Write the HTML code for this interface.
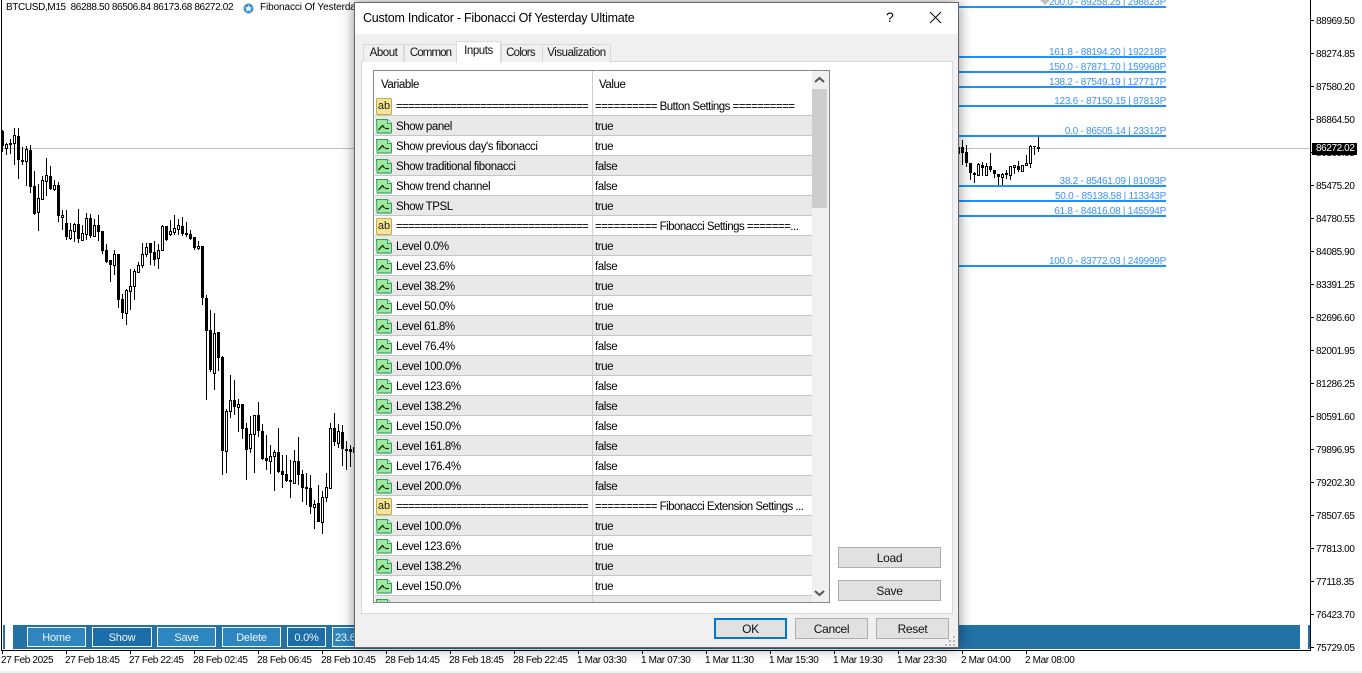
<!DOCTYPE html>
<html><head><meta charset="utf-8"><title>Custom Indicator</title>
<style>
html,body{margin:0;padding:0;background:#fff}
body{width:1362px;height:673px;position:relative;overflow:hidden;font-family:"Liberation Sans",sans-serif;color:#000}
.t{position:absolute;white-space:nowrap;font-size:10px;line-height:12px;letter-spacing:-.36px}
.p{left:1316px;color:#000;margin-top:3px;letter-spacing:-.4px}
.x{top:655px}
.f{right:196px;color:#3c91ff;letter-spacing:-.26px;margin-top:1px}
.l{position:absolute;left:940px;width:226px;height:2px;background:#1e90ff}
.k{position:absolute;top:650px;width:1px;height:4px;background:#000}
.y{position:absolute;left:1310px;width:4px;height:1px;background:#000}
.bar{position:absolute;top:625px;height:24px;background:#2272a6}
.bb{position:absolute;top:627px;height:18px;border:1px solid #fff;color:#f2f6fa;font-size:11px;line-height:20px;text-align:center;background:#2e86c0;box-sizing:content-box;letter-spacing:-.2px}
.d{background:#1b6ea9}
#dlg{position:absolute;left:354px;top:2px;width:605px;height:646px;box-sizing:border-box;background:#f0f0f0;border:1px solid #666;box-shadow:0 0 13px rgba(0,0,0,.45)}
#tb{position:absolute;left:0;top:0;right:0;height:31px;background:#fff}
.dt{position:absolute;white-space:nowrap;font-size:12px;line-height:14px;letter-spacing:-.42px;color:#000}
.tab{position:absolute;top:41px;height:17px;background:#f0f0f0;border:1px solid #d9d9d9;border-bottom:none;font-size:11.5px;line-height:16px;text-align:center;letter-spacing:-.45px;color:#111}
#pan{position:absolute;left:6px;top:58px;width:590px;height:551px;background:#fff;border:1px solid #d9d9d9}
#list{position:absolute;left:18px;top:67px;width:455px;height:531px;background:#fff;border:1px solid #828790;overflow:hidden}
.r{position:absolute;left:1px;width:437px;height:19px;border-bottom:1px solid #c6c6c6;font-size:11.5px;letter-spacing:-.42px;line-height:19px;color:#000}
.g{background:#e9e9e9}
.r svg{position:absolute;left:1px;top:2px;height:16px}
.r .a{position:absolute;left:21px;top:2px;white-space:nowrap;width:195px;overflow:hidden}
.r .b{position:absolute;left:220px;top:2px;white-space:nowrap;width:216px;overflow:hidden}
.r .e{letter-spacing:-.72px}
.r .v{letter-spacing:-.52px}
.ab{position:absolute;left:1px;top:2px;width:14px;height:15px;background:#f6e594;border:1px solid #c0a84c;border-radius:2px;font-size:11px;line-height:14px;text-align:center;letter-spacing:0;color:#222}
.sep{position:absolute;left:218px;top:0;width:1px;height:531px;background:#cfcfcf}
.btn{position:absolute;background:#e1e1e1;border:1px solid #adadad;box-sizing:border-box;font-size:12px;line-height:21px;text-align:center;letter-spacing:-.3px;color:#111}
</style></head><body>
<svg width="0" height="0" style="position:absolute"><defs>
<symbol id="gi" viewBox="0 0 16 16"><path d="M.5 1.500h11l4 4v9l-1.500 1-1.500-1-1.500 1-1.500-1-1.500 1-1.500-1-1.500 1-1.500-1-1.500 1-1-1z" fill="#9fe89c" stroke="#2fa060"/><path d="M11.500 1.500v4h4" fill="#e4f8e0" stroke="#2fa060"/><path d="M2.500 12l4-4.500 2 2.500" fill="none" stroke="#0d2a1c" stroke-width="1.300"/><path d="M9 10.500h4" stroke="#0d2a1c" stroke-width="1.200"/></symbol>
</defs></svg>

<svg width="1362" height="673" style="position:absolute;left:0;top:0">
<rect x="0" y="671" width="1362" height="2" fill="#f0f0f0"/>
<rect x="1" y="0" width="1" height="650" fill="#000"/>
<rect x="1" y="650" width="1310" height="1" fill="#000"/>
<rect x="1310" y="0" width="1" height="651" fill="#000"/>
<rect x="2" y="148" width="1308" height="1" fill="#c0c0c0"/>
<path stroke="#000" fill="none" d="M2.500 130V152M6.500 143V155M10.500 139V154M14.500 128V165M18.500 128V179M22.500 147V165M26.500 146V186M30.500 145V193M34.500 171V215M38.500 184V231M42.500 176V200M46.500 158V196M50.500 166V190M54.500 180V191M58.500 182V222M62.500 210V230M66.500 210V240M70.500 223V240M74.500 223V242M78.500 209V243M82.500 225V241M86.500 213V240M90.500 214V238M94.500 219V236M98.500 215V241M102.500 231V254M106.500 244V263M110.500 260V282M114.500 250V275M118.500 254V308M122.500 294V319M126.500 289V325M130.500 269V310M134.500 269V300M138.500 262V273M142.500 243V268M146.500 243V257M150.500 243V265M154.500 241V266M158.500 244V269M162.500 225V250M166.500 226V241M170.500 220V236M174.500 215V235M178.500 219V235M182.500 217V236M186.500 222V237M190.500 230V240M194.500 237V250M198.500 241V250M202.500 246V305M206.500 295V400M210.500 310V372M214.500 313V390M218.500 332V371M222.500 356V475M226.500 409V473M230.500 375V418M234.500 380V415M238.500 399V432M242.500 404V439M246.500 423V480M250.500 416V453M254.500 415V473M258.500 402V437M262.500 424V460M266.500 435V470M270.500 445V474M274.500 450V491M278.500 428V473M282.500 455V488M286.500 455V482M290.500 460V498M294.500 450V484M298.500 437V485M302.500 470V502M306.500 473V505M310.500 475V514M314.500 500V529M318.500 485V522M322.500 491V534M326.500 473V502M330.500 423V489M334.500 413V446M338.500 424V448M342.500 425V466M346.500 441V470M350.500 445V467M354.500 433V456M958.500 145V160M962.500 140V165M966.500 145V167M970.500 163V180M974.500 172V183M978.500 163V176M982.500 162V176M986.500 163V176M990.500 153V172M994.500 170V178M998.500 174V186M1002.500 173V186M1006.500 170V179M1010.500 166V180M1014.500 165V174M1018.500 161V172M1022.500 165V172M1026.500 155V165M1030.500 145V168M1034.500 146V155M1038.500 136V152"/>
<path fill="#000" d="M1 131h3v15h-3zM9 143h3v2h-3zM17 136h3v24h-3zM21 160h3v2h-3zM29 150h3v37h-3zM33 186h3v28h-3zM49 176h3v13h-3zM57 185h3v31h-3zM65 223h3v14h-3zM77 224h3v15h-3zM89 218h3v18h-3zM97 225h3v7h-3zM101 231h3v20h-3zM105 250h3v12h-3zM109 260h3v5h-3zM117 254h3v46h-3zM121 299h3v14h-3zM149 243h3v10h-3zM153 252h3v8h-3zM165 226h3v14h-3zM181 226h3v8h-3zM185 233h3v2h-3zM189 234h3v5h-3zM193 237h3v11h-3zM201 246h3v52h-3zM205 298h3v33h-3zM209 330h3v40h-3zM217 332h3v26h-3zM221 357h3v94h-3zM233 400h3v7h-3zM241 404h3v25h-3zM245 428h3v22h-3zM257 415h3v16h-3zM261 431h3v28h-3zM265 458h3v3h-3zM277 452h3v20h-3zM281 471h3v4h-3zM285 474h3v7h-3zM289 480h3v2h-3zM297 461h3v14h-3zM301 474h3v14h-3zM305 487h3v2h-3zM309 488h3v19h-3zM317 503h3v19h-3zM333 428h3v14h-3zM341 432h3v17h-3zM345 449h3v2h-3zM349 449h3v3h-3zM957 147h3v7h-3zM961 147h3v6h-3zM965 152h3v11h-3zM969 163h3v10h-3zM973 173h3v2h-3zM981 165h3v3h-3zM989 166h3v4h-3zM993 170h3v4h-3zM997 174h3v3h-3zM1005 173h3v2h-3zM1017 166h3v4h-3zM1033 146h3v1h-3zM1037 147h3v2h-3z"/>
<g fill="#fff" stroke="#000"><rect x="5.500" y="144.500" width="2" height="4"/><rect x="13.500" y="135.500" width="2" height="8"/><rect x="25.500" y="149.500" width="2" height="12"/><rect x="37.500" y="198.500" width="2" height="14"/><rect x="41.500" y="180.500" width="2" height="19"/><rect x="45.500" y="175.500" width="2" height="6"/><rect x="53.500" y="185.500" width="2" height="4"/><rect x="61.500" y="215.500" width="2" height="2"/><rect x="69.500" y="230.500" width="2" height="8"/><rect x="73.500" y="224.500" width="2" height="7"/><rect x="81.500" y="233.500" width="2" height="7"/><rect x="85.500" y="218.500" width="2" height="16"/><rect x="93.500" y="225.500" width="2" height="11"/><rect x="113.500" y="254.500" width="2" height="11"/><rect x="125.500" y="290.500" width="2" height="23"/><rect x="129.500" y="286.500" width="2" height="5"/><rect x="133.500" y="271.500" width="2" height="15"/><rect x="137.500" y="265.500" width="2" height="7"/><rect x="141.500" y="254.500" width="2" height="11"/><rect x="145.500" y="247.500" width="2" height="7"/><rect x="157.500" y="250.500" width="2" height="8"/><rect x="161.500" y="226.500" width="2" height="24"/><rect x="169.500" y="231.500" width="2" height="3"/><rect x="173.500" y="228.500" width="2" height="4"/><rect x="177.500" y="225.500" width="2" height="4"/><rect x="197.500" y="246.500" width="2" height="2"/><rect x="213.500" y="333.500" width="2" height="40"/><rect x="225.500" y="411.500" width="2" height="40"/><rect x="229.500" y="400.500" width="2" height="11"/><rect x="237.500" y="404.500" width="2" height="3"/><rect x="249.500" y="434.500" width="2" height="14"/><rect x="253.500" y="415.500" width="2" height="19"/><rect x="269.500" y="456.500" width="2" height="5"/><rect x="273.500" y="452.500" width="2" height="4"/><rect x="293.500" y="461.500" width="2" height="22"/><rect x="313.500" y="504.500" width="2" height="3"/><rect x="321.500" y="497.500" width="2" height="25"/><rect x="325.500" y="487.500" width="2" height="10"/><rect x="329.500" y="428.500" width="2" height="60"/><rect x="337.500" y="431.500" width="2" height="12"/><rect x="353.500" y="447.500" width="2" height="5"/><rect x="977.500" y="164.500" width="2" height="11"/><rect x="985.500" y="166.500" width="2" height="9"/><rect x="1001.500" y="174.500" width="2" height="3"/><rect x="1009.500" y="166.500" width="2" height="9"/><rect x="1013.500" y="165.500" width="2" height="2"/><rect x="1021.500" y="165.500" width="2" height="6"/><rect x="1025.500" y="163.500" width="2" height="2"/><rect x="1029.500" y="146.500" width="2" height="17"/></g>
<path d="M1040 0h10l-5 5z" fill="#c0c0c0"/>
</svg>

<div class="l" style="top:6px"></div><div class="l" style="top:56px"></div><div class="l" style="top:71px"></div><div class="l" style="top:86px"></div><div class="l" style="top:105px"></div><div class="l" style="top:135px"></div><div class="l" style="top:185px"></div><div class="l" style="top:200px"></div><div class="l" style="top:215px"></div><div class="l" style="top:265px"></div>
<div class="t f" style="top:-4px">200.0 - 89258.25 | 298823P</div>
<div class="t f" style="top:46px">161.8 - 88194.20 | 192218P</div>
<div class="t f" style="top:61px">150.0 - 87871.70 | 159968P</div>
<div class="t f" style="top:76px">138.2 - 87549.19 | 127717P</div>
<div class="t f" style="top:95px">123.6 - 87150.15 | 87813P</div>
<div class="t f" style="top:125px">0.0 - 86505.14 | 23312P</div>
<div class="t f" style="top:175px">38.2 - 85461.09 | 81093P</div>
<div class="t f" style="top:190px">50.0 - 85138.58 | 113343P</div>
<div class="t f" style="top:205px">61.8 - 84816.08 | 145594P</div>
<div class="t f" style="top:255px">100.0 - 83772.03 | 249999P</div>

<div class="t" style="left:6px;top:2px">BTCUSD,M15&nbsp; 86288.50 86506.84 86173.68 86272.02</div>
<svg style="position:absolute;left:243px;top:3px" width="11" height="11" viewBox="0 0 11 11"><circle cx="5.500" cy="5.500" r="5" fill="#3a8fd0"/><path d="M5.500 1.800l1.100 2.500 2.600.2-2 1.700.7 2.600-2.400-1.400-2.400 1.400.7-2.600-2-1.700 2.600-.2z" fill="#e8f3fb"/></svg>
<div class="t" style="left:260px;top:2px;letter-spacing:-.1px">Fibonacci Of Yesterday Ultimate</div>

<div class="y" style="top:20px"></div><div class="y" style="top:53px"></div><div class="y" style="top:86px"></div><div class="y" style="top:119px"></div><div class="y" style="top:152px"></div><div class="y" style="top:185px"></div><div class="y" style="top:218px"></div><div class="y" style="top:251px"></div><div class="y" style="top:284px"></div><div class="y" style="top:317px"></div><div class="y" style="top:350px"></div><div class="y" style="top:383px"></div><div class="y" style="top:416px"></div><div class="y" style="top:449px"></div><div class="y" style="top:482px"></div><div class="y" style="top:515px"></div><div class="y" style="top:548px"></div><div class="y" style="top:581px"></div><div class="y" style="top:614px"></div><div class="y" style="top:647px"></div>
<div class="t p" style="top:13px">88969.50</div><div class="t p" style="top:46px">88274.85</div><div class="t p" style="top:79px">87580.20</div><div class="t p" style="top:112px">86864.50</div><div class="t p" style="top:145px">86169.85</div><div class="t p" style="top:178px">85475.20</div><div class="t p" style="top:211px">84780.55</div><div class="t p" style="top:244px">84085.90</div><div class="t p" style="top:277px">83391.25</div><div class="t p" style="top:310px">82696.60</div><div class="t p" style="top:343px">82001.95</div><div class="t p" style="top:376px">81286.25</div><div class="t p" style="top:409px">80591.60</div><div class="t p" style="top:442px">79896.95</div><div class="t p" style="top:475px">79202.30</div><div class="t p" style="top:508px">78507.65</div><div class="t p" style="top:541px">77813.00</div><div class="t p" style="top:574px">77118.35</div><div class="t p" style="top:607px">76423.70</div><div class="t p" style="top:640px">75729.05</div>
<div style="position:absolute;left:1312px;top:143px;width:45px;height:12px;background:#000"></div>
<div class="t p" style="top:143px;margin-top:0;color:#fff">86272.02</div>

<div class="bar" style="left:3px;width:2px"></div>
<div class="bar" style="left:13px;width:1287px"></div>
<div class="bar" style="left:1308px;width:2px"></div>
<div class="bb" style="left:27px;width:57px">Home</div>
<div class="bb d" style="left:92px;width:58px">Show</div>
<div class="bb" style="left:157px;width:57px">Save</div>
<div class="bb" style="left:222px;width:57px">Delete</div>
<div class="bb d" style="left:287px;width:37px">0.0%</div>
<div class="bb" style="left:332px;width:60px;text-align:left;padding-left:2px">23.6%</div>

<div class="k" style="left:2px"></div><div class="k" style="left:66px"></div><div class="k" style="left:130px"></div><div class="k" style="left:194px"></div><div class="k" style="left:258px"></div><div class="k" style="left:322px"></div><div class="k" style="left:386px"></div><div class="k" style="left:450px"></div><div class="k" style="left:514px"></div><div class="k" style="left:578px"></div><div class="k" style="left:642px"></div><div class="k" style="left:706px"></div><div class="k" style="left:770px"></div><div class="k" style="left:834px"></div><div class="k" style="left:898px"></div><div class="k" style="left:962px"></div><div class="k" style="left:1026px"></div>
<div class="t x" style="left:1px">27 Feb 2025</div><div class="t x" style="left:65px">27 Feb 18:45</div><div class="t x" style="left:129px">27 Feb 22:45</div><div class="t x" style="left:193px">28 Feb 02:45</div><div class="t x" style="left:257px">28 Feb 06:45</div><div class="t x" style="left:321px">28 Feb 10:45</div><div class="t x" style="left:385px">28 Feb 14:45</div><div class="t x" style="left:449px">28 Feb 18:45</div><div class="t x" style="left:513px">28 Feb 22:45</div><div class="t x" style="left:577px">1 Mar 03:30</div><div class="t x" style="left:641px">1 Mar 07:30</div><div class="t x" style="left:705px">1 Mar 11:30</div><div class="t x" style="left:769px">1 Mar 15:30</div><div class="t x" style="left:833px">1 Mar 19:30</div><div class="t x" style="left:897px">1 Mar 23:30</div><div class="t x" style="left:961px">2 Mar 04:00</div><div class="t x" style="left:1025px">2 Mar 08:00</div>

<div id="dlg">
<div id="tb"></div>
<div class="dt" style="left:8px;top:8px;font-size:12.500px;letter-spacing:-.24px">Custom Indicator - Fibonacci Of Yesterday Ultimate</div>
<div class="dt" style="left:531px;top:7px;font-size:14px">?</div>
<svg style="position:absolute;left:574px;top:8px" width="13" height="13"><path d="M1 1L12 12M12 1L1 12" stroke="#111" stroke-width="1.100"/></svg>
<div id="pan"></div>
<div class="tab" style="left:8px;width:39px">About</div>
<div class="tab" style="left:49px;width:51px;letter-spacing:-.9px">Common</div>
<div class="tab" style="left:146px;width:37px;border-right:none;padding-right:3px;letter-spacing:-.75px">Colors</div>
<div class="tab" style="left:187px;width:67px">Visualization</div>
<div class="tab" style="left:101px;top:38px;width:43px;height:21px;background:#fff;line-height:19px">Inputs</div>
<div id="list">
<div class="dt" style="left:7px;top:7px;font-size:11.500px">Variable</div>
<div class="dt" style="left:225px;top:7px;font-size:11.500px">Value</div>
<div class="r" style="top:25px"><div class="ab">ab</div><span class="a e">================================</span><span class="b v">========== Button Settings ==========</span></div>
<div class="r g" style="top:45px"><svg width="16" height="17"><use href="#gi"/></svg><span class="a">Show panel</span><span class="b">true</span></div>
<div class="r" style="top:65px"><svg width="16" height="17"><use href="#gi"/></svg><span class="a">Show previous day's fibonacci</span><span class="b">true</span></div>
<div class="r g" style="top:85px"><svg width="16" height="17"><use href="#gi"/></svg><span class="a">Show traditional fibonacci</span><span class="b">false</span></div>
<div class="r" style="top:105px"><svg width="16" height="17"><use href="#gi"/></svg><span class="a">Show trend channel</span><span class="b">false</span></div>
<div class="r g" style="top:125px"><svg width="16" height="17"><use href="#gi"/></svg><span class="a">Show TPSL</span><span class="b">true</span></div>
<div class="r" style="top:145px"><div class="ab">ab</div><span class="a e">================================</span><span class="b v">========== Fibonacci Settings =======...</span></div>
<div class="r g" style="top:165px"><svg width="16" height="17"><use href="#gi"/></svg><span class="a">Level 0.0%</span><span class="b">true</span></div>
<div class="r" style="top:185px"><svg width="16" height="17"><use href="#gi"/></svg><span class="a">Level 23.6%</span><span class="b">false</span></div>
<div class="r g" style="top:205px"><svg width="16" height="17"><use href="#gi"/></svg><span class="a">Level 38.2%</span><span class="b">true</span></div>
<div class="r" style="top:225px"><svg width="16" height="17"><use href="#gi"/></svg><span class="a">Level 50.0%</span><span class="b">true</span></div>
<div class="r g" style="top:245px"><svg width="16" height="17"><use href="#gi"/></svg><span class="a">Level 61.8%</span><span class="b">true</span></div>
<div class="r" style="top:265px"><svg width="16" height="17"><use href="#gi"/></svg><span class="a">Level 76.4%</span><span class="b">false</span></div>
<div class="r g" style="top:285px"><svg width="16" height="17"><use href="#gi"/></svg><span class="a">Level 100.0%</span><span class="b">true</span></div>
<div class="r" style="top:305px"><svg width="16" height="17"><use href="#gi"/></svg><span class="a">Level 123.6%</span><span class="b">false</span></div>
<div class="r g" style="top:325px"><svg width="16" height="17"><use href="#gi"/></svg><span class="a">Level 138.2%</span><span class="b">false</span></div>
<div class="r" style="top:345px"><svg width="16" height="17"><use href="#gi"/></svg><span class="a">Level 150.0%</span><span class="b">false</span></div>
<div class="r g" style="top:365px"><svg width="16" height="17"><use href="#gi"/></svg><span class="a">Level 161.8%</span><span class="b">false</span></div>
<div class="r" style="top:385px"><svg width="16" height="17"><use href="#gi"/></svg><span class="a">Level 176.4%</span><span class="b">false</span></div>
<div class="r g" style="top:405px"><svg width="16" height="17"><use href="#gi"/></svg><span class="a">Level 200.0%</span><span class="b">false</span></div>
<div class="r" style="top:425px"><div class="ab">ab</div><span class="a e">================================</span><span class="b v">========== Fibonacci Extension Settings ...</span></div>
<div class="r g" style="top:445px"><svg width="16" height="17"><use href="#gi"/></svg><span class="a">Level 100.0%</span><span class="b">true</span></div>
<div class="r" style="top:465px"><svg width="16" height="17"><use href="#gi"/></svg><span class="a">Level 123.6%</span><span class="b">true</span></div>
<div class="r g" style="top:485px"><svg width="16" height="17"><use href="#gi"/></svg><span class="a">Level 138.2%</span><span class="b">true</span></div>
<div class="r" style="top:505px"><svg width="16" height="17"><use href="#gi"/></svg><span class="a">Level 150.0%</span><span class="b">true</span></div>
<div class="r g" style="top:525px"><svg width="16" height="17"><use href="#gi"/></svg><span class="a"></span></div>
<div class="sep"></div>
<div style="position:absolute;left:438px;top:0;width:17px;height:531px;background:#f0f0f0"></div>
<div style="position:absolute;left:438px;top:18px;width:15px;height:119px;background:#cdcdcd"></div>
<svg style="position:absolute;left:440px;top:5px" width="11" height="8"><path d="M1 6L5.500 2L10 6" fill="none" stroke="#555" stroke-width="2"/></svg>
<svg style="position:absolute;left:440px;top:518px" width="11" height="8"><path d="M1 2L5.500 6L10 2" fill="none" stroke="#555" stroke-width="2"/></svg>
</div>
<div class="btn" style="left:483px;top:544px;width:103px;height:21px">Load</div>
<div class="btn" style="left:483px;top:577px;width:103px;height:21px">Save</div>
<div class="btn" style="left:359px;top:615px;width:73px;height:21px;border:2px solid #0078d7;line-height:19px">OK</div>
<div class="btn" style="left:440px;top:615px;width:73px;height:21px">Cancel</div>
<div class="btn" style="left:521px;top:615px;width:73px;height:21px">Reset</div>
<svg style="position:absolute;left:590px;top:632px" width="12" height="12"><path d="M8 1h2v2h-2zM4 5h2v2h-2zM8 5h2v2h-2zM0 9h2v2h-2zM4 9h2v2h-2zM8 9h2v2h-2z" fill="#b8b8b8"/></svg>
</div>
</body></html>
